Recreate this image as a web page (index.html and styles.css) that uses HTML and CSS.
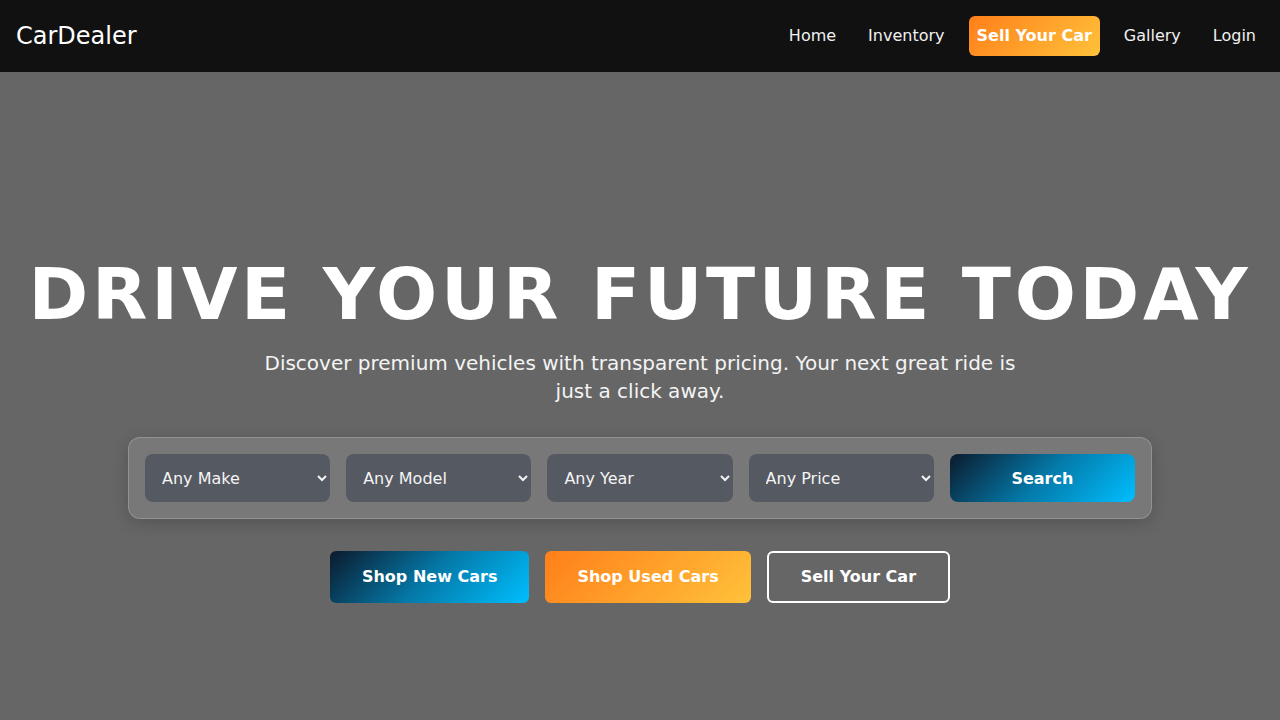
FILE: index.html
```html
<!DOCTYPE html>
<html lang="en">
<head>
<meta charset="utf-8">
<title>CarDealer</title>
<link rel="stylesheet" href="styles.css">
</head>
<body>
<header class="navbar">
  <a class="brand" href="#">CarDealer</a>
  <nav class="nav-links">
    <a href="#" class="nav-link">Home</a>
    <a href="#" class="nav-link">Inventory</a>
    <a href="#" class="nav-link nav-cta">Sell Your Car</a>
    <a href="#" class="nav-link">Gallery</a>
    <a href="#" class="nav-link">Login</a>
  </nav>
</header>
<main class="hero">
  <div class="hero-content">
    <h1 class="hero-title">DRIVE YOUR FUTURE TODAY</h1>
    <p class="hero-subtitle">Discover premium vehicles with transparent pricing. Your next great ride is just a click away.</p>
    <form class="search-panel">
      <select class="search-select"><option>Any Make</option></select>
      <select class="search-select"><option>Any Model</option></select>
      <select class="search-select"><option>Any Year</option></select>
      <select class="search-select"><option>Any Price</option></select>
      <button type="button" class="search-btn">Search</button>
    </form>
    <div class="cta-row">
      <a href="#" class="cta cta-blue">Shop New Cars</a>
      <a href="#" class="cta cta-orange">Shop Used Cars</a>
      <a href="#" class="cta cta-outline">Sell Your Car</a>
    </div>
  </div>
</main>
</body>
</html>
```
FILE: styles.css
```css
* { box-sizing: border-box; }
html, body { margin: 0; padding: 0; }
body {
  font-family: "DejaVu Sans", sans-serif;
  background: #666666;
  color: #ffffff;
  height: 720px;
  overflow: hidden;
  display: flex;
  flex-direction: column;
}
a { text-decoration: none; color: inherit; }

.navbar {
  height: 72px;
  flex: none;
  background: #111111;
  display: flex;
  align-items: center;
  justify-content: space-between;
  padding: 0 16px;
}
.brand {
  font-size: 24px;
  color: #ffffff;
}
.nav-links {
  display: flex;
  align-items: center;
  gap: 16px;
}
.nav-link {
  font-size: 16px;
  line-height: 24px;
  padding: 8px;
  color: #f0f0f0;
  border-radius: 6px;
}
.nav-cta {
  font-weight: bold;
  color: #ffffff;
  background: linear-gradient(135deg, #ff7f1a 0%, #ffc23a 100%);
}

.hero {
  flex: 1;
  display: flex;
  align-items: center;
  justify-content: center;
}
.hero-content {
  display: flex;
  flex-direction: column;
  align-items: center;
  text-align: center;
  padding-top: 62px;
}
.hero-title {
  margin: 0 0 12px;
  font-size: 72px;
  line-height: 1.2;
  font-weight: bold;
  letter-spacing: 3.7px;
  color: #ffffff;
}
.hero-subtitle {
  margin: 0 0 32px;
  max-width: 770px;
  font-size: 20px;
  line-height: 28px;
  color: #f4f4f4;
}
.search-panel {
  width: 1024px;
  display: grid;
  grid-template-columns: repeat(5, 1fr);
  gap: 16px;
  padding: 16px;
  background: rgba(255, 255, 255, 0.12);
  border: 1px solid rgba(255, 255, 255, 0.2);
  border-radius: 12px;
  box-shadow: 0 4px 16px rgba(0, 0, 0, 0.18);
  margin: 0 0 32px;
}
.search-select {
  height: 48px;
  padding: 0 12px 0 13px;
  font-family: "DejaVu Sans", sans-serif;
  font-size: 16px;
  color: #f4f4f4;
  background: #555962;
  border: none;
  border-radius: 8px;
}
.search-btn {
  height: 48px;
  font-family: "DejaVu Sans", sans-serif;
  font-size: 16px;
  font-weight: bold;
  color: #ffffff;
  border: none;
  border-radius: 8px;
  background: linear-gradient(135deg, #0b1a2c 0%, #0479a8 50%, #00bfff 100%);
}
.cta-row {
  display: flex;
  gap: 16px;
}
.cta {
  font-size: 16px;
  line-height: 24px;
  font-weight: bold;
  padding: 14px 32px;
  border-radius: 6px;
  color: #ffffff;
}
.cta-blue {
  background: linear-gradient(135deg, #0b1a2c 0%, #0479a8 50%, #00bfff 100%);
}
.cta-orange {
  background: linear-gradient(135deg, #ff7f1a 0%, #ffc23a 100%);
}
.cta-outline {
  border: 2px solid #ffffff;
  padding: 12px 32px;
}
```
